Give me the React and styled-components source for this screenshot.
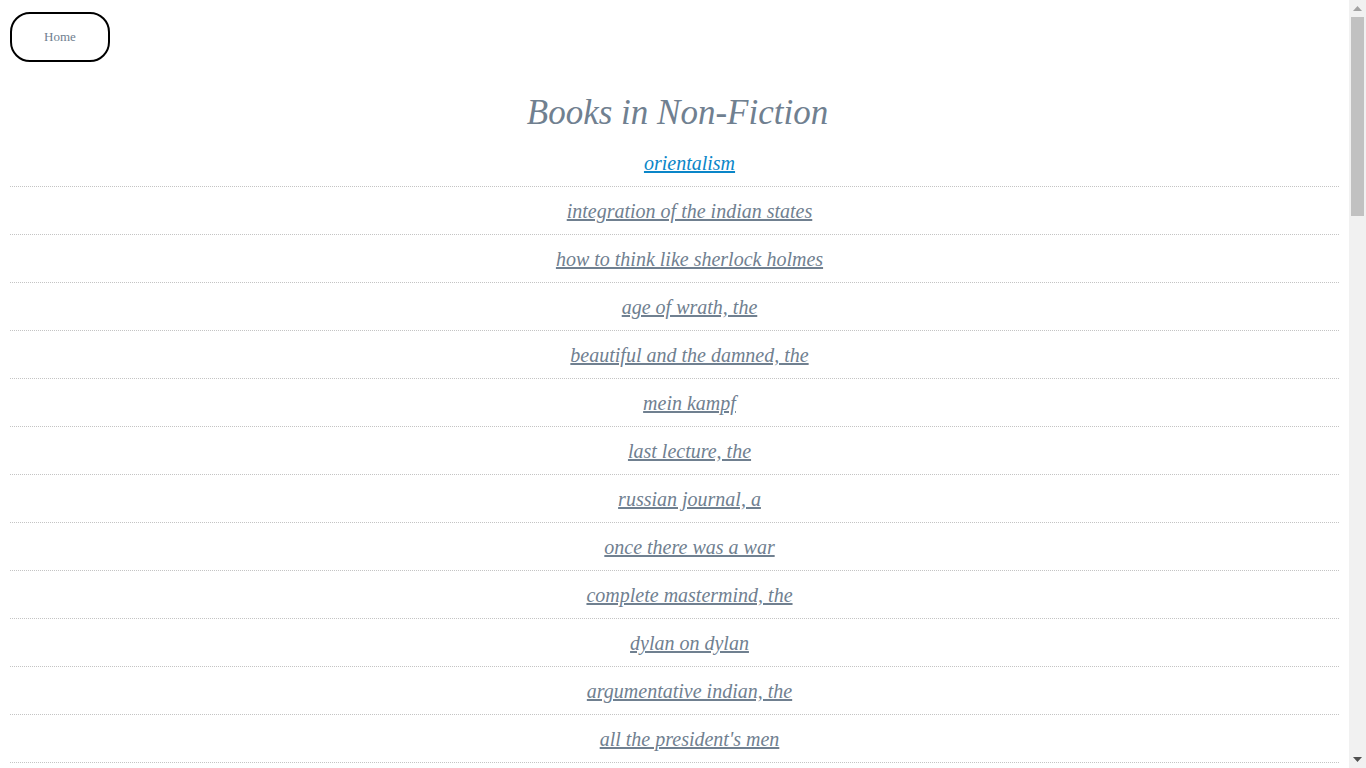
import React from "react";
import styled, { createGlobalStyle } from "styled-components";

const GlobalStyle = createGlobalStyle`
  html, body {
    margin: 0;
    padding: 0;
    height: 100%;
    overflow: hidden;
    background: #fff;
    font-family: "Liberation Serif", "Times New Roman", serif;
  }
`;

const Shell = styled.div`
  display: flex;
  height: 100vh;
`;

const Viewport = styled.div`
  flex: 1;
  overflow-y: auto;
  scrollbar-width: none;
  &::-webkit-scrollbar {
    display: none;
  }
`;

const ScrollRail = styled.div`
  display: flex;
  flex-direction: column;
  align-items: center;
  width: 17px;
  flex-shrink: 0;
  background: #f1f1f1;
`;

const ArrowButton = styled.div`
  display: flex;
  align-items: center;
  justify-content: center;
  width: 17px;
  height: 17px;
`;

const Thumb = styled.div`
  width: 13px;
  height: 199px;
  background: #c1c1c1;
`;

const RailSpacer = styled.div`
  flex: 1;
`;

const Page = styled.div`
  padding: 12px 10px 10px;
`;

const HomeButton = styled.button`
  display: block;
  width: 100px;
  height: 50px;
  border: 2px solid #000;
  border-radius: 20px;
  background: #fff;
  color: slategray;
  font-family: "Liberation Serif", "Times New Roman", serif;
  font-size: 13px;
  cursor: pointer;
`;

const Title = styled.h1`
  margin: 30px 0 6px;
  padding-left: 6px;
  text-align: center;
  font-size: 35px;
  font-style: italic;
  font-weight: normal;
  line-height: 41px;
  color: slategray;
`;

const BookList = styled.ul`
  list-style: none;
  margin: 0;
  padding: 0;
`;

const BookRow = styled.li`
  padding: 13px 0 11px 30px;
  border-bottom: 1px dotted #c4c4c4;
  text-align: center;
  font-size: 20px;
  line-height: 23px;
`;

const BookLink = styled.a`
  font-size: 20px;
  font-style: italic;
  color: ${({ $active }) => ($active ? "#0a86c8" : "slategray")};
  text-decoration: underline;
  cursor: pointer;
`;

const books = [
  "orientalism",
  "integration of the indian states",
  "how to think like sherlock holmes",
  "age of wrath, the",
  "beautiful and the damned, the",
  "mein kampf",
  "last lecture, the",
  "russian journal, a",
  "once there was a war",
  "complete mastermind, the",
  "dylan on dylan",
  "argumentative indian, the",
  "all the president's men",
  "india after gandhi",
  "sapiens",
  "guns, germs and steel",
  "long walk to freedom",
  "diary of a young girl, the",
  "in cold blood",
  "wings of fire",
  "discovery of india, the",
  "silent spring",
  "freakonomics",
  "tipping point, the",
  "outliers",
  "art of war, the",
  "prince, the",
  "road to serfdom, the",
  "wealth of nations, the",
  "story of my experiments with truth, the",
  "emperor of all maladies, the",
  "brief history of time, a",
  "selfish gene, the",
  "origin of species, the",
  "man's search for meaning",
  "immortal life of henrietta lacks, the",
  "into the wild",
  "into thin air",
  "cosmos",
  "black swan, the",
  "thinking, fast and slow",
  "when breath becomes air",
  "educated",
  "glimpses of world history",
  "wonder that was india, the",
  "city of djinns",
  "maximum city",
  "age of extremes, the",
  "gulag archipelago, the",
  "autobiography of malcolm x, the",
  "power broker, the",
  "elements of style, the",
  "feminine mystique, the",
  "people's history of the united states, a",
  "last days of the raj, the",
  "nine lives",
];

const App = () => {
  return (
    <Shell>
      <GlobalStyle />
      <Viewport>
        <Page>
          <HomeButton>Home</HomeButton>
          <Title>Books in Non-Fiction</Title>
          <BookList>
            {books.map((book, i) => (
              <BookRow key={book}>
                <BookLink $active={i === 0}>{book}</BookLink>
              </BookRow>
            ))}
          </BookList>
        </Page>
      </Viewport>
      <ScrollRail>
        <ArrowButton>
          <svg width="9" height="5" viewBox="0 0 9 5">
            <polygon points="4.5,0 9,5 0,5" fill="#a3a3a3" />
          </svg>
        </ArrowButton>
        <Thumb />
        <RailSpacer />
        <ArrowButton>
          <svg width="9" height="5" viewBox="0 0 9 5">
            <polygon points="0,0 9,0 4.5,5" fill="#505050" />
          </svg>
        </ArrowButton>
      </ScrollRail>
    </Shell>
  );
};

export default App;
